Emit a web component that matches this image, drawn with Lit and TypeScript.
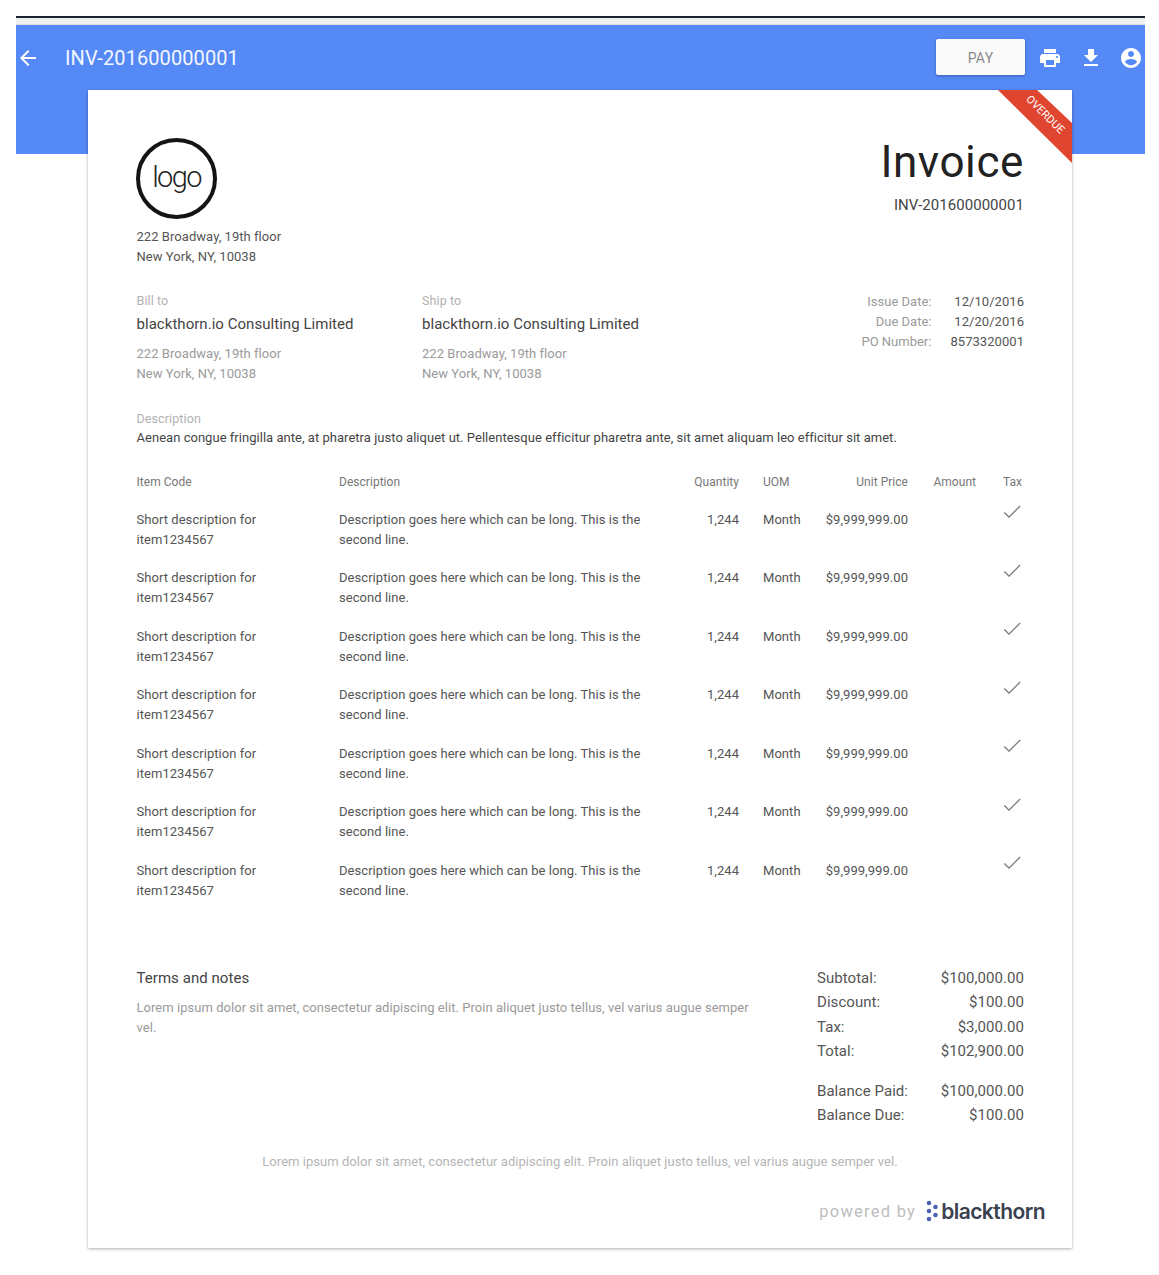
import { LitElement, html, css, svg } from "lit";
import { customElement } from "lit/decorators.js";

const rows = [1, 2, 3, 4, 5, 6, 7];

@customElement("app-root")
export class AppRoot extends LitElement {
  static styles = css`
    :host { display: block; background: #fff; font-family: Roboto, "Liberation Sans", sans-serif; color: #212121; height: 1275px; overflow: hidden; }
    .page { padding: 16px 14px 0 16px; }
    .topline { height: 2px; background: #1d2333; }
    .gap { height: 7px; background: #f0f0f0; border-bottom: 1px solid #dcdcdc; box-sizing: border-box; }
    .hero { height: 129px; background: #5589f6; }
    .bar { height: 65px; display: flex; align-items: center; color: #fff; }
    .back { width: 26px; height: 26px; flex: none; }
    .title { margin-left: 25px; font-size: 20px; letter-spacing: 0.09px; flex: 1; color: #f4f7ff; }
    .pay { box-sizing: border-box; width: 89px; height: 36px; padding-top: 2px; background: #fafafa; color: #8a8a8a; border-radius: 2px; box-shadow: 0 1px 3px rgba(0,0,0,.3); display: flex; align-items: center; justify-content: center; font-size: 14px; letter-spacing: .3px; margin-bottom: 1px; }
    .ic { width: 24px; height: 24px; fill: #fff; flex: none; }
    .print { margin-left: 13px; }
    .dl { margin-left: 17px; }
    .acct { margin-left: 16px; margin-right: 2px; }
    .card { position: relative; box-sizing: border-box; width: 984px; height: 1158px; margin: -64px 0 0 72px; background: #fff; box-shadow: 0 1px 3px rgba(0,0,0,.32); padding: 48px 48px 0 48.5px; }
    .ribbon-wrap { position: absolute; top: 0; right: 0; width: 80px; height: 80px; overflow: hidden; }
    .ribbon { display: block; width: 80px; height: 80px; }
    .ribbon-text { position: absolute; top: 19px; left: 18px; width: 70px; text-align: center; transform: rotate(45deg); font-size: 11px; line-height: 12px; color: #fff; letter-spacing: .1px; }
    .head { display: flex; justify-content: space-between; height: 153px; }
    .logo { width: 81px; height: 81px; margin-left: -.5px; box-sizing: border-box; border: 4px solid #141414; border-radius: 50%; display: flex; align-items: center; justify-content: center; font-size: 29px; font-weight: 300; letter-spacing: -1.6px; color: #222; padding-bottom: 4px; }
    .addr { margin-top: 8px; font-size: 13px; line-height: 20px; color: #555; letter-spacing: .05px; }
    .inv { text-align: right; }
    .inv h1 { margin: 0; font-weight: 400; font-size: 44px; line-height: 52px; letter-spacing: .6px; color: #222; margin-top: -2px; }
    .inv div { margin-top: 7px; font-size: 15px; line-height: 20px; color: #444; letter-spacing: .04px; }
    .parties { display: flex; height: 118px; }
    .party { width: 285.5px; }
    .label { font-size: 12.5px; line-height: 20px; color: #b2b2b2; letter-spacing: .1px; }
    .name { font-size: 15px; line-height: 24px; margin-top: 1px; color: #444; letter-spacing: .04px; }
    .paddr { margin-top: 8px; font-size: 13px; line-height: 20px; color: #9a9a9a; letter-spacing: .05px; }
    .meta { margin-left: auto; padding-top: 1px; display: grid; grid-template-columns: auto auto; column-gap: 19px; font-size: 13px; line-height: 20px; align-content: start; text-align: right; }
    .meta .k { color: #9a9a9a; }
    .meta .v { color: #555; letter-spacing: .05px; }
    .desc-block { height: 63px; }
    .desc-block p { margin: 0; font-size: 13px; line-height: 18px; color: #444; letter-spacing: .03px; }
    .table { display: grid; grid-template-columns: 202.5px 1fr 81.5px 69px 100px 68px 48px; font-size: 13px; line-height: 20px; color: #555; letter-spacing: .05px; }
    .th { font-size: 12px; line-height: 20px; color: #777; height: 37.5px; font-weight: 400; letter-spacing: .03px; }
    .td { height: 58.55px; box-sizing: border-box; }
    .r { text-align: right; }
    .uom { padding-left: 24px; }
    .pr { padding-right: 2px; }
    .wrap { max-width: 125px; }
    .wrap2 { max-width: 310px; }
    .check { width: 24px; height: 24px; display: block; margin: -9.5px 0 0 auto; fill: #777; }
    .foot { display: flex; justify-content: space-between; margin-top: 47px; height: 186px; }
    .terms { width: 630px; }
    .terms h3 { margin: 0; font-weight: 400; font-size: 15px; line-height: 24px; color: #444; letter-spacing: .05px; }
    .terms p { margin: 8px 0 0; font-size: 13px; line-height: 20px; color: #9a9a9a; letter-spacing: .04px; }
    .totals { width: 207px; font-size: 15px; line-height: 24.1px; color: #555; letter-spacing: .05px; }
    .tr { display: flex; justify-content: space-between; }
    .sp { height: 16.5px; }
    .note { text-align: center; font-size: 13px; line-height: 20px; color: #b5b5b5; letter-spacing: .04px; width: 887px; }
    .powered { position: absolute; right: 27px; bottom: 25px; display: flex; align-items: center; height: 24px; }
    .pb { font-size: 16.5px; color: #bdbdbd; letter-spacing: 1.25px; }
    .dots { width: 13px; height: 22px; margin: 0 2px 0 10px; }
    .bt { font-family: Inter, Roboto, sans-serif; font-size: 21px; font-weight: 600; color: #3b4150; letter-spacing: -.55px; }
  `;

  render() {
    return html`
      <div class="page">
        <div class="topline"></div>
        <div class="gap"></div>
        <div class="hero">
          <div class="bar">
            <svg class="ic back" viewBox="0 0 24 24"><path d="M20 11H7.83l5.59-5.59L12 4l-8 8 8 8 1.41-1.41L7.83 13H20v-2z"/></svg>
            <div class="title">INV-201600000001</div>
            <div class="pay">PAY</div>
            <svg class="ic print" viewBox="0 0 24 24"><path d="M19 8H5c-1.66 0-3 1.34-3 3v6h4v4h12v-4h4v-6c0-1.66-1.34-3-3-3zm-3 11H8v-5h8v5zm3-7c-.55 0-1-.45-1-1s.45-1 1-1 1 .45 1 1-.45 1-1 1zm-1-9H6v4h12V3z"/></svg>
            <svg class="ic dl" viewBox="0 0 24 24"><path d="M19 9h-4V3H9v6H5l7 7 7-7zM5 18v2h14v-2H5z"/></svg>
            <svg class="ic acct" viewBox="0 0 24 24"><path d="M12 2C6.48 2 2 6.48 2 12s4.48 10 10 10 10-4.48 10-10S17.52 2 12 2zm0 3c1.66 0 3 1.34 3 3s-1.34 3-3 3-3-1.34-3-3 1.34-3 3-3zm0 14.2c-2.5 0-4.71-1.28-6-3.22.03-1.99 4-3.08 6-3.08 1.99 0 5.97 1.09 6 3.08-1.29 1.94-3.5 3.22-6 3.22z"/></svg>
          </div>
        </div>
        <div class="card">
          <div class="ribbon-wrap">
            <svg class="ribbon" viewBox="0 0 80 80">${svg`<polygon points="6,0 45,0 80,33 80,73" fill="#e04530"/>`}</svg>
            <div class="ribbon-text">OVERDUE</div>
          </div>
          <div class="head">
            <div>
              <div class="logo">logo</div>
              <div class="addr">222 Broadway, 19th floor<br />New York, NY, 10038</div>
            </div>
            <div class="inv">
              <h1>Invoice</h1>
              <div>INV-201600000001</div>
            </div>
          </div>
          <div class="parties">
            <div class="party">
              <div class="label">Bill to</div>
              <div class="name">blackthorn.io Consulting Limited</div>
              <div class="paddr">222 Broadway, 19th floor<br />New York, NY, 10038</div>
            </div>
            <div class="party">
              <div class="label">Ship to</div>
              <div class="name">blackthorn.io Consulting Limited</div>
              <div class="paddr">222 Broadway, 19th floor<br />New York, NY, 10038</div>
            </div>
            <div class="meta">
              <div class="k">Issue Date:</div><div class="v">12/10/2016</div>
              <div class="k">Due Date:</div><div class="v">12/20/2016</div>
              <div class="k">PO Number:</div><div class="v">8573320001</div>
            </div>
          </div>
          <div class="desc-block">
            <div class="label">Description</div>
            <p>Aenean congue fringilla ante, at pharetra justo aliquet ut. Pellentesque efficitur pharetra ante, sit amet aliquam leo efficitur sit amet.</p>
          </div>
          <div class="table">
            <div class="th">Item Code</div>
            <div class="th">Description</div>
            <div class="th r">Quantity</div>
            <div class="th uom">UOM</div>
            <div class="th r">Unit Price</div>
            <div class="th r">Amount</div>
            <div class="th r pr">Tax</div>
            ${rows.map(
              () => html`
                <div class="td"><div class="wrap">Short description for item1234567</div></div>
                <div class="td"><div class="wrap2">Description goes here which can be long. This is the second line.</div></div>
                <div class="td r">1,244</div>
                <div class="td uom">Month</div>
                <div class="td r">$9,999,999.00</div>
                <div class="td r"></div>
                <div class="td r"><svg class="check" viewBox="0 0 24 24"><path d="M9 16.2 4.8 12l-.9.9L9 18 20.6 6.4l-.9-.9z"/></svg></div>
              `
            )}
          </div>
          <div class="foot">
            <div class="terms">
              <h3>Terms and notes</h3>
              <p>Lorem ipsum dolor sit amet, consectetur adipiscing elit. Proin aliquet justo tellus, vel varius augue semper vel.</p>
            </div>
            <div class="totals">
              <div class="tr"><span>Subtotal:</span><span>$100,000.00</span></div>
              <div class="tr"><span>Discount:</span><span>$100.00</span></div>
              <div class="tr"><span>Tax:</span><span>$3,000.00</span></div>
              <div class="tr"><span>Total:</span><span>$102,900.00</span></div>
              <div class="sp"></div>
              <div class="tr"><span>Balance Paid:</span><span>$100,000.00</span></div>
              <div class="tr"><span>Balance Due:</span><span>$100.00</span></div>
            </div>
          </div>
          <div class="note">Lorem ipsum dolor sit amet, consectetur adipiscing elit. Proin aliquet justo tellus, vel varius augue semper vel.</div>
          <div class="powered">
            <span class="pb">powered by</span>
            <svg class="dots" viewBox="0 0 13 22" fill="#4a63b0"><circle cx="3" cy="3" r="2.3"/><circle cx="9.5" cy="7" r="2.3"/><circle cx="3" cy="11" r="2.3"/><circle cx="9.5" cy="15" r="2.3"/><circle cx="3" cy="19" r="2.3"/></svg>
            <span class="bt">blackthorn</span>
          </div>
        </div>
      </div>
    `;
  }
}
